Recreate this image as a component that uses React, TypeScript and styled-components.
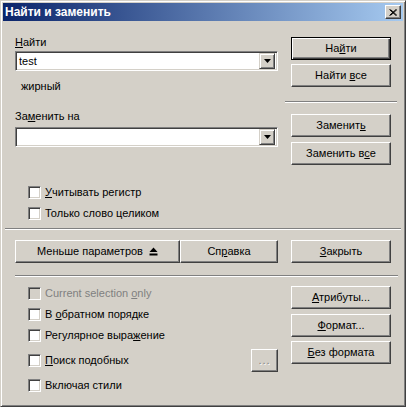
import React from 'react';
import styled, {createGlobalStyle} from 'styled-components';

const GlobalStyle = createGlobalStyle`
	html, body {
		margin: 0;
		padding: 0;
		background: #d4d0c8;
	}
	body {
		font-family: "Liberation Sans", Arial, sans-serif;
		font-size: 11px;
		color: #000;
	}
`;

const Window = styled.div`
	box-sizing: border-box;
	width: 406px;
	height: 407px;
	padding: 2px;
	background: #d4d0c8;
	border: 1px solid;
	border-color: #d4d0c8 #404040 #404040 #d4d0c8;
	box-shadow: inset 1px 1px #fff, inset -1px -1px #808080;
	display: flex;
	flex-direction: column;
`;

const TitleBar = styled.div`
	height: 18px;
	display: flex;
	align-items: center;
	justify-content: space-between;
	padding: 0 2px 0 2px;
	background: linear-gradient(to right, #0a246a, #a6caf0);
	color: #fff;
	font-weight: bold;
	font-size: 12px;
`;

const CloseButton = styled.div`
	box-sizing: border-box;
	width: 16px;
	height: 14px;
	background: #d4d0c8;
	border: 1px solid;
	border-color: #fff #404040 #404040 #fff;
	box-shadow: inset -1px -1px #808080;
	display: flex;
	align-items: center;
	justify-content: center;
`;

const Body = styled.div`
	display: flex;
	flex-direction: column;
	padding: 0 0 0 12px;
`;

const Section = styled.div`
	display: grid;
	grid-template-columns: 263px 112px;
	column-gap: 7px;
`;

const Column = styled.div<{$top: number}>`
	display: flex;
	flex-direction: column;
	padding-top: ${(p) => p.$top}px;
`;

const RightColumn = styled(Column)`
	align-items: center;
`;

const Label = styled.div<{$mt?: number; $indent?: number}>`
	line-height: 13px;
	height: 13px;
	margin-top: ${(p) => p.$mt ?? 0}px;
	padding-left: ${(p) => p.$indent ?? 0}px;
	white-space: nowrap;
`;

const U = styled.span`
	text-decoration: underline;
	text-underline-offset: 1px;
`;

const Combo = styled.div<{$mt: number}>`
	box-sizing: border-box;
	height: 20px;
	margin-top: ${(p) => p.$mt}px;
	background: #fff;
	border: 1px solid;
	border-color: #808080 #fff #fff #808080;
	box-shadow: inset 1px 1px #404040, inset -1px -1px #d4d0c8;
	display: flex;
	align-items: center;
	justify-content: space-between;
	padding: 0 2px 0 3px;
`;

const ComboArrow = styled.div`
	box-sizing: border-box;
	width: 16px;
	height: 16px;
	background: #d4d0c8;
	border: 1px solid;
	border-color: #d4d0c8 #404040 #404040 #d4d0c8;
	box-shadow: inset 1px 1px #fff, inset -1px -1px #808080;
	display: flex;
	align-items: center;
	justify-content: center;
`;

const Button = styled.div<{$mt?: number; $default?: boolean; $width?: number}>`
	box-sizing: border-box;
	width: ${(p) => p.$width ?? 100}px;
	height: 23px;
	margin-top: ${(p) => p.$mt ?? 0}px;
	background: #d4d0c8;
	border: 1px solid;
	border-color: ${(p) => (p.$default ? '#000' : '#fff #404040 #404040 #fff')};
	box-shadow: ${(p) =>
		p.$default
			? 'inset 1px 1px #fff, inset -1px -1px #404040, inset -2px -2px #808080'
			: 'inset -1px -1px #808080'};
	display: flex;
	align-items: center;
	justify-content: center;
	white-space: nowrap;
	flex-shrink: 0;
`;

const Caption = styled.span`
	line-height: 13px;
`;

const IconSlot = styled.span`
	display: inline-flex;
	margin-left: 6px;
`;

const Separator = styled.div<{$mt: number; $ml?: number; $mr?: number}>`
	height: 0;
	border-top: 1px solid #808080;
	border-bottom: 1px solid #fff;
	margin: ${(p) => p.$mt}px ${(p) => p.$mr ?? 0}px 0 ${(p) => p.$ml ?? 0}px;
	align-self: stretch;
`;

const CheckRow = styled.div<{$mt?: number; $disabled?: boolean}>`
	display: flex;
	align-items: center;
	gap: 4px;
	padding-left: 13px;
	margin-top: ${(p) => p.$mt ?? 0}px;
	line-height: 13px;
	color: ${(p) => (p.$disabled ? '#808080' : '#000')};
	white-space: nowrap;
`;

const CheckBox = styled.span<{$disabled?: boolean}>`
	box-sizing: border-box;
	width: 13px;
	height: 13px;
	flex-shrink: 0;
	background: ${(p) => (p.$disabled ? '#d4d0c8' : '#fff')};
	border: 1px solid;
	border-color: #808080 #fff #fff #808080;
	box-shadow: inset 1px 1px #404040, inset -1px -1px #d4d0c8;
`;

const ButtonRow = styled.div`
	display: flex;
	margin-top: 10px;
`;

const SplitGroup = styled.div`
	display: flex;
	width: 263px;
	margin-right: 13px;
`;

const Dots = styled.span`
	color: #808080;
	text-shadow: 1px 1px #fff;
	letter-spacing: 1px;
	line-height: 13px;
`;

const SimilarRow = styled.div`
	display: flex;
	align-items: center;
	justify-content: space-between;
	margin-top: 7px;
`;

const Check = ({
	children,
	mt,
	disabled,
}: {
	children: React.ReactNode;
	mt?: number;
	disabled?: boolean;
}) => (
	<CheckRow $mt={mt} $disabled={disabled}>
		<CheckBox $disabled={disabled} />
		<span>{children}</span>
	</CheckRow>
);

const DropTriangle = () => (
	<svg width="7" height="4" viewBox="0 0 7 4">
		<polygon points="0,0 7,0 3.5,4" fill="#000" />
	</svg>
);

const EjectIcon = () => (
	<svg width="9" height="9" viewBox="0 0 9 9">
		<polygon points="0.5,5 8.5,5 4.5,0.5" fill="#000" />
		<rect x="0.5" y="6.5" width="8" height="2" fill="#000" />
	</svg>
);

const CloseIcon = () => (
	<svg width="8" height="7" viewBox="0 0 8 7">
		<path
			d="M0.5 0.5 L7 6.5 M1.5 0.5 L8 6.5 M7 0.5 L0.5 6.5 M8 0.5 L1.5 6.5"
			stroke="#000"
			strokeWidth="1"
		/>
	</svg>
);

const App = () => (
	<>
		<GlobalStyle />
		<Window>
			<TitleBar>
				<span>Найти и заменить</span>
				<CloseButton>
					<CloseIcon />
				</CloseButton>
			</TitleBar>
			<Body>
				<Section>
					<Column $top={15}>
						<Label>
							<U>Н</U>айти
						</Label>
						<Combo $mt={2}>
							<span>test</span>
							<ComboArrow>
								<DropTriangle />
							</ComboArrow>
						</Combo>
						<Label $mt={9} $indent={6}>
							жирный
						</Label>
						<Label $mt={17}>
							За<U>м</U>енить на
						</Label>
						<Combo $mt={4}>
							<span />
							<ComboArrow>
								<DropTriangle />
							</ComboArrow>
						</Combo>
						<Check mt={39}>
							<U>У</U>читывать регистр
						</Check>
						<Check mt={8}>Только слово целиком</Check>
					</Column>
					<RightColumn $top={16}>
						<Button $default>
							<Caption>
								На<U>й</U>ти
							</Caption>
						</Button>
						<Button $mt={4}>
							<Caption>
								Найти <U>в</U>се
							</Caption>
						</Button>
						<Separator $mt={14} />
						<Button $mt={11}>
							<Caption>
								Заменит<U>ь</U>
							</Caption>
						</Button>
						<Button $mt={5}>
							<Caption>
								Заменить в<U>с</U>е
							</Caption>
						</Button>
					</RightColumn>
				</Section>
				<Separator $mt={8} $ml={-10} $mr={2} />
				<ButtonRow>
					<SplitGroup>
						<Button $width={165}>
							<Caption>Меньше параметров</Caption>
							<IconSlot>
								<EjectIcon />
							</IconSlot>
						</Button>
						<Button $width={98}>
							<Caption>
								Сп<U>р</U>авка
							</Caption>
						</Button>
					</SplitGroup>
					<Button>
						<Caption>
							<U>З</U>акрыть
						</Caption>
					</Button>
				</ButtonRow>
				<Separator $mt={12} $mr={5} />
				<Section>
					<Column $top={10}>
						<Check disabled>
							Current selection <U>o</U>nly
						</Check>
						<Check mt={8}>
							В <U>о</U>братном порядке
						</Check>
						<Check mt={8}>
							Регулярное выра<U>ж</U>ение
						</Check>
						<SimilarRow>
							<Check>
								<U>П</U>оиск подобных
							</Check>
							<Button $width={27}>
								<Dots>...</Dots>
							</Button>
						</SimilarRow>
						<Check mt={7}>Включая стили</Check>
					</Column>
					<RightColumn $top={9}>
						<Button>
							<Caption>
								<U>А</U>трибуты...
							</Caption>
						</Button>
						<Button $mt={5}>
							<Caption>
								<U>Ф</U>ормат...
							</Caption>
						</Button>
						<Button $mt={4}>
							<Caption>
								<U>Б</U>ез формата
							</Caption>
						</Button>
					</RightColumn>
				</Section>
			</Body>
		</Window>
	</>
);

export default App;
